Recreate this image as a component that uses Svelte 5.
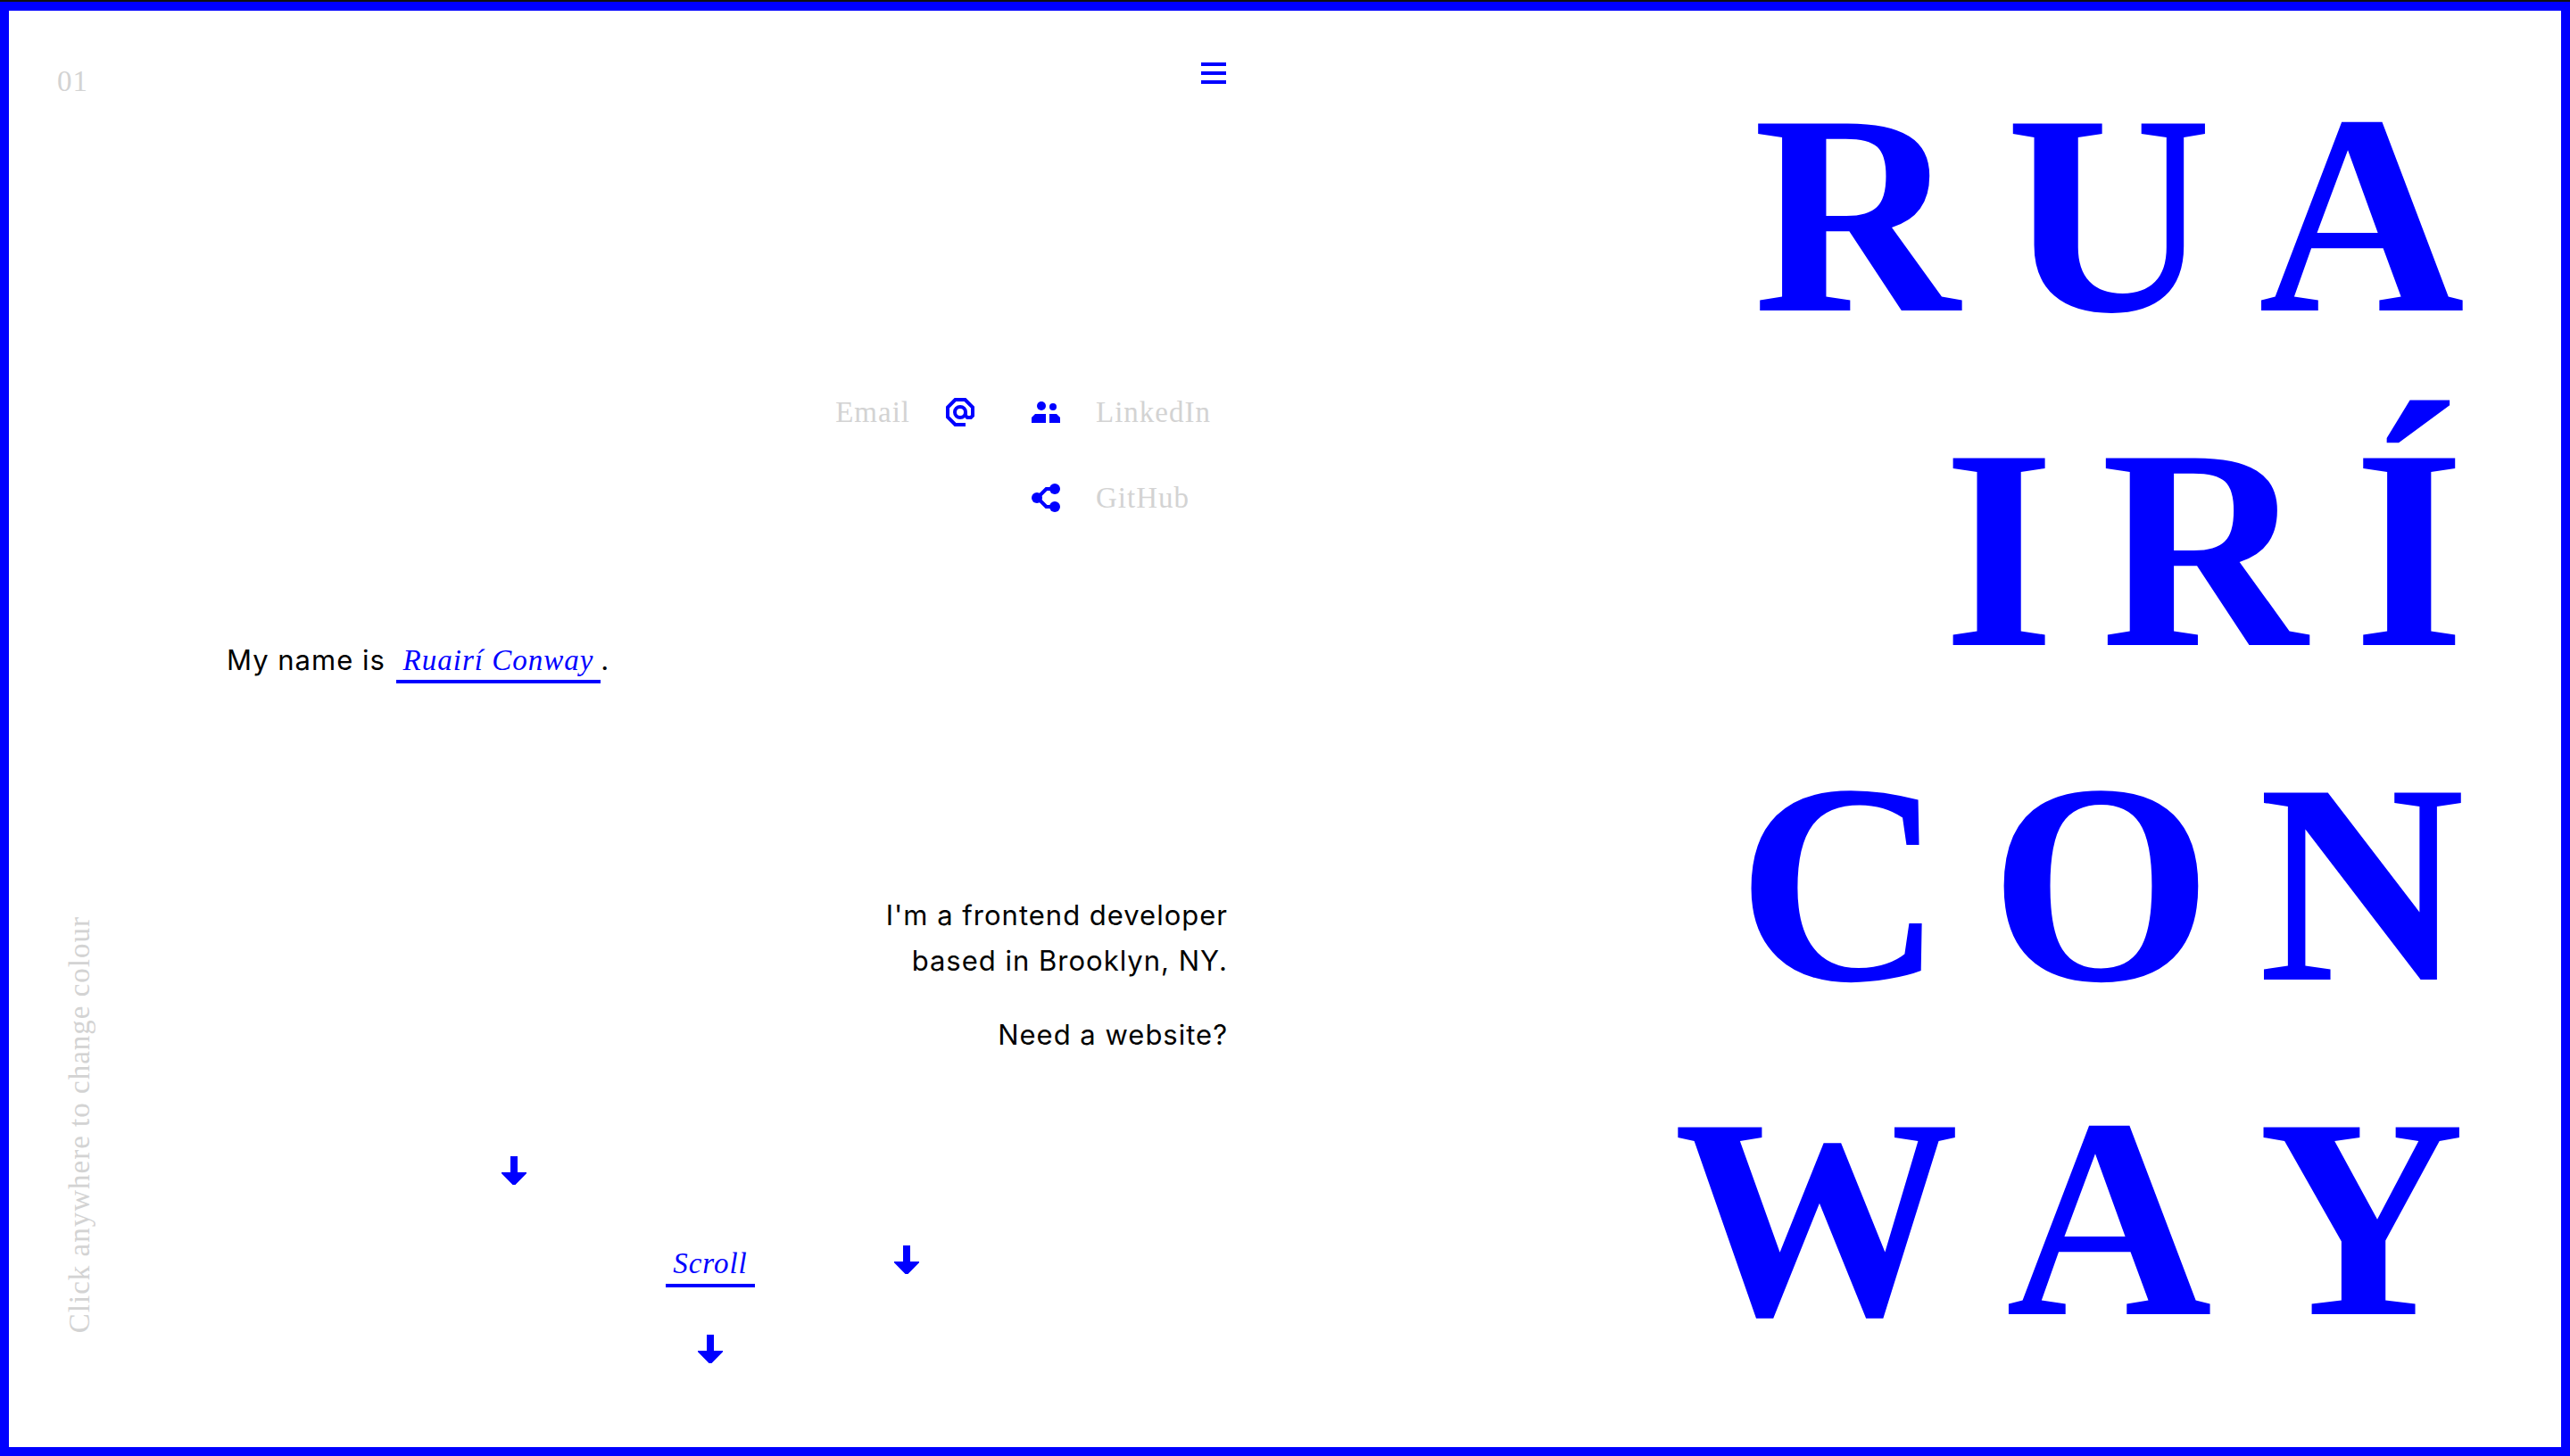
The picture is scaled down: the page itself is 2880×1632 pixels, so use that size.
<script>
  const themes = ['blue', 'red', 'green'];
  const nameLines = ['RUA', 'IRÍ', 'CON', 'WAY'];
  let current = $state(0);

  function nextTheme() {
    current = (current + 1) % themes.length;
  }
</script>

<svelte:window onclick={nextTheme} />

{#snippet arrow(place)}
  <svg class="arrow {place}" viewBox="0 0 28 32" aria-hidden="true">
    <path d="M10 0h8v18h10v1.2L15.5 32h-3L0 19.2V18h10z" />
  </svg>
{/snippet}

<div class="page {themes[current]}">
  <div class="frame">
    <section class="left">
      <aside>
        <span class="note">01</span>
        <span class="note vertical">Click anywhere to change colour</span>
      </aside>

      <main>
        <button class="menu" aria-label="Menu">
          <svg viewBox="0 0 28 24" aria-hidden="true">
            <path d="M0 0h28v4H0zM0 10h28v4H0zM0 20h28v4H0z" />
          </svg>
        </button>

        <nav>
          <a class="link email" href="#email">
            <span class="note">Email</span>
            <span class="cell">
              <svg class="stroked" viewBox="0 0 32 32" aria-hidden="true">
                <circle cx="16" cy="16" r="6" />
                <path d="M22 30H10.5L2 21.5v-11L10.5 2h11L30 10.5V20L28 22h-4L22 20V16" />
              </svg>
            </span>
          </a>
          <a class="link" href="#linkedin">
            <span class="cell">
              <svg viewBox="0 0 32 32" aria-hidden="true">
                <circle cx="11" cy="9" r="5" />
                <circle cx="24" cy="10" r="4" />
                <path d="M4 18h12v10H0v-6zM20 18h8l4 4v6H20z" />
              </svg>
            </span>
            <span class="note">LinkedIn</span>
          </a>
          <a class="link github" href="#github">
            <span class="cell">
              <svg viewBox="0 0 32 32" aria-hidden="true">
                <circle cx="6" cy="16" r="6" />
                <circle cx="26" cy="6" r="6" />
                <circle cx="26" cy="26" r="6" />
                <path class="joint" d="M26 6H16.5l-10 10 10 10H26" />
              </svg>
            </span>
            <span class="note">GitHub</span>
          </a>
        </nav>

        <p class="intro">My name is <a class="accent" href="#about">Ruairí Conway</a>.</p>

        <div class="about">
          <p>I'm a frontend developer<br />based in Brooklyn, NY.</p>
          <p>Need a website?</p>
        </div>

        <div class="scroll">
          {@render arrow('first')}
          <a class="accent" href="#next">Scroll</a>
          {@render arrow('second')}
          {@render arrow('third')}
        </div>
      </main>
    </section>

    <h1>
      {#each nameLines as line}
        <span>{line}</span>
      {/each}
    </h1>
  </div>
</div>

<style>
  :global(body) {
    margin: 0;
    background: #fff;
  }

  .page {
    --accent: #00f;
    box-sizing: border-box;
    display: flex;
    min-height: 100vh;
    border-top: 2px solid #111;
    color: #000;
    font: 31px/51px Inter, "Liberation Sans", sans-serif;
    letter-spacing: 1px;
  }

  .page.red {
    --accent: #f00;
  }

  .page.green {
    --accent: #0a0;
  }

  .frame {
    box-sizing: border-box;
    display: grid;
    grid-template-columns: 1fr 1fr;
    width: 100%;
    border: 10px solid var(--accent);
  }

  .left {
    display: grid;
    grid-template-columns: 152px 1fr;
    padding: 46px 64px 60px 54px;
  }

  aside {
    display: flex;
    flex-direction: column;
    align-items: flex-start;
    justify-content: space-between;
    padding: 8px 0 68px;
  }

  .note {
    color: #d3d3d3;
    font-family: "Liberation Serif", serif;
    font-size: 33px;
  }

  .vertical {
    writing-mode: vertical-rl;
    transform: rotate(180deg);
    white-space: nowrap;
  }

  main {
    display: flex;
    flex-direction: column;
  }

  svg {
    display: block;
    width: 32px;
    height: 32px;
    fill: var(--accent);
  }

  .menu {
    align-self: flex-end;
    padding: 12px 2px 12px 12px;
    border: 0;
    background: none;
    cursor: pointer;
  }

  .menu svg {
    width: 28px;
    height: 24px;
  }

  nav {
    display: grid;
    grid-template-columns: auto 252px;
    grid-auto-rows: 96px;
    justify-content: end;
    margin-top: 308px;
  }

  .link {
    display: flex;
    align-items: center;
    gap: 8px;
    text-decoration: none;
  }

  .github {
    grid-column: 2;
  }

  .cell {
    display: grid;
    place-items: center;
    width: 96px;
    height: 96px;
  }

  .stroked,
  .joint {
    fill: none;
    stroke: var(--accent);
    stroke-width: 4;
  }

  p {
    margin: 0;
  }

  .intro {
    margin: 108px 0 0 38px;
  }

  .accent {
    padding: 0 8px 4px;
    border-bottom: 4px solid var(--accent);
    color: var(--accent);
    font-family: "Liberation Serif", serif;
    font-size: 33px;
    font-style: italic;
    text-decoration: none;
  }

  .intro .accent {
    margin-left: 2px;
  }

  .about {
    display: grid;
    gap: 32px;
    margin-top: 234px;
    text-align: right;
  }

  .scroll {
    display: grid;
    grid-template-columns: repeat(3, 19%);
    grid-auto-rows: 100px;
    justify-content: center;
    place-items: center;
    margin-top: 77px;
  }

  .scroll .accent {
    grid-area: 2 / 2;
    padding-top: 16px;
    line-height: 38px;
  }

  .arrow {
    width: 28px;
  }

  .first {
    grid-area: 1 / 1;
  }

  .second {
    grid-area: 2 / 3;
  }

  .third {
    grid-area: 3 / 2;
  }

  h1 {
    margin: 0;
    padding: 41px 56px 60px 0;
    color: var(--accent);
    font: bold 320px/375px "Liberation Serif", serif;
    font-kerning: none;
    letter-spacing: 52px;
    text-align: right;
  }

  h1 span {
    display: block;
  }
</style>
